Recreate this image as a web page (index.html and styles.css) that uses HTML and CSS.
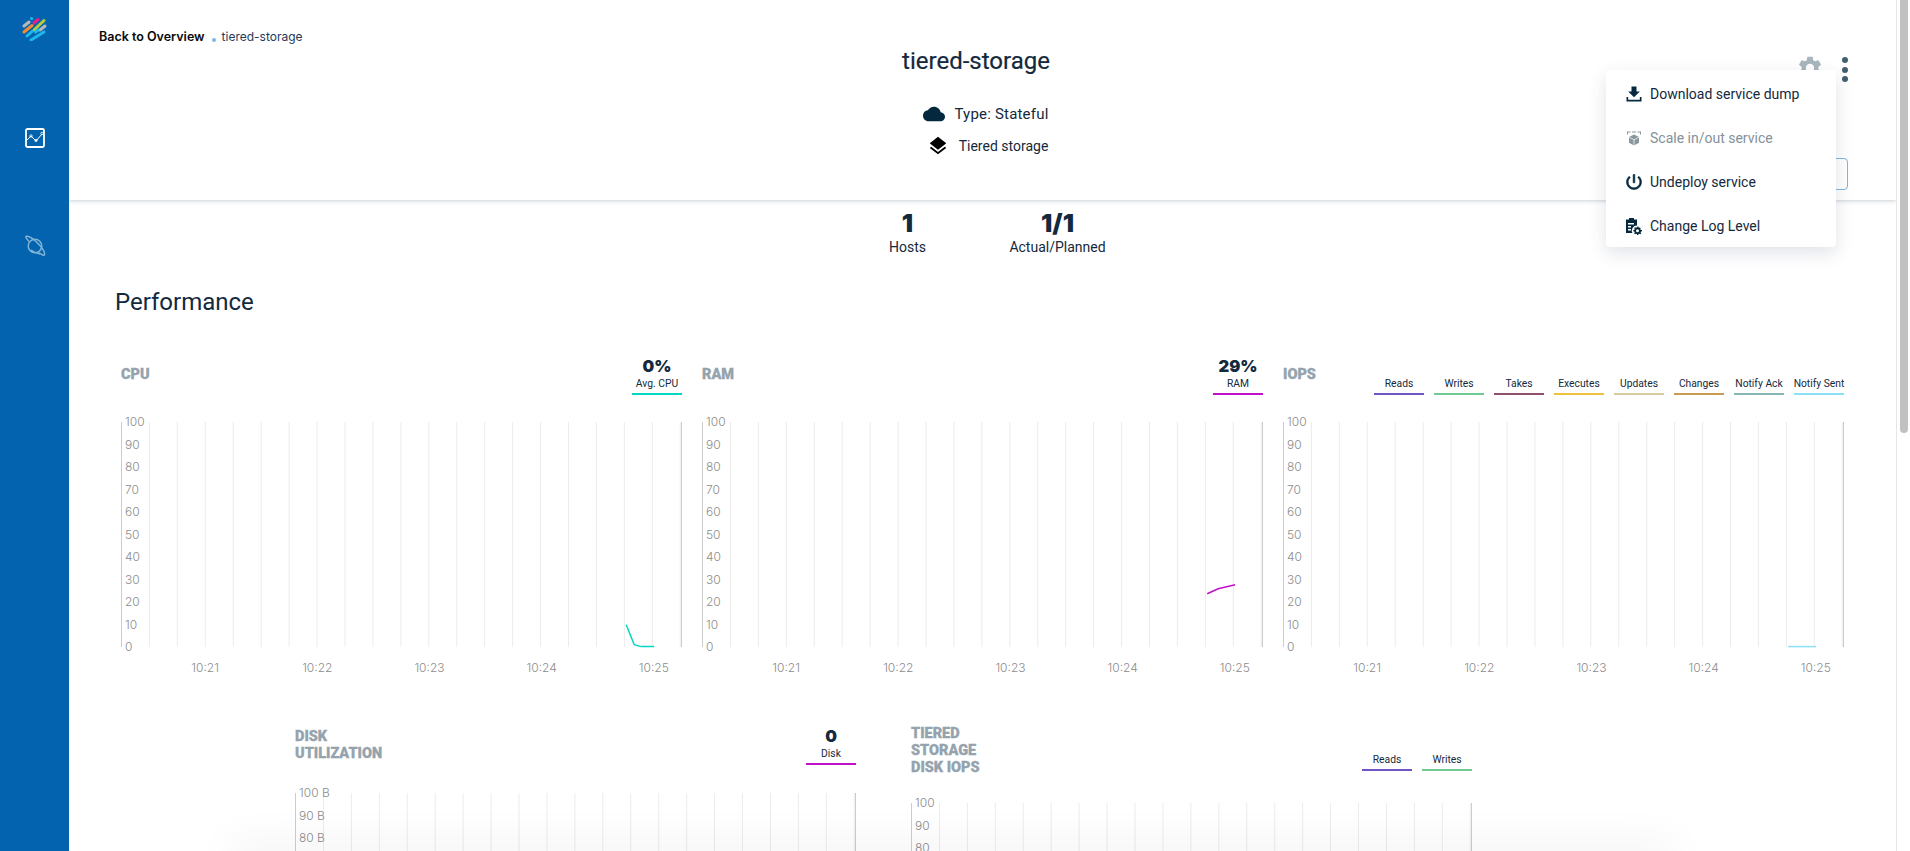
FILE: index.html
```html
<!DOCTYPE html>
<html lang="en">
<head>
    <meta charset="UTF-8">
    <title>tiered-storage</title>
    <link rel="stylesheet" href="styles.css">
</head>
<body>
    <nav class="sidebar">
        <svg class="logo" width="26" height="26" viewBox="0 0 26 26" fill="none" stroke-width="3" stroke-linecap="round">
            <path d="M2 11l5-4" stroke="#b4b8bc"/>
            <path d="M9.5 3.5h.1" stroke="#1fb6ec"/>
            <path d="M12 8l4-3.500" stroke="#ec1c8e"/>
            <path d="M2 17l8-6.500" stroke="#f28b30"/>
            <path d="M12 15l10-9.500" stroke="#b5cf3a"/>
            <path d="M18 15l5-4" stroke="#b4b8bc"/>
            <path d="M5 21l5-4.500" stroke="#1fb6ec"/>
            <path d="M9 25l13-8" stroke="#1fb6ec"/>
            <path d="M16 15l-2.500 2" stroke="#1fb6ec"/>
        </svg>
        <svg class="nav-icon" width="20" height="20" viewBox="0 0 20 20" fill="none" stroke="#fff">
            <rect x="1" y="1" width="18" height="18" rx="1.500" stroke-width="1.800"/>
            <path d="M1 13l5-5 5 5 6-7" stroke-width="1"/>
            <circle cx="6" cy="8" r="1.200" stroke-width="0.800"/>
            <circle cx="11" cy="12.500" r="1.200" stroke-width="0.800"/>
            <circle cx="17" cy="5.500" r="1.200" stroke-width="0.800"/>
        </svg>
        <svg class="nav-icon nav-icon-planet" width="22" height="22" viewBox="0 0 22 22" fill="none" stroke="#7fb4d8" stroke-width="1.500">
            <circle cx="11" cy="11" r="6.800"/>
            <path d="M5 6.500C2.500 3.500 1 1.800 2.500 1.300 4.500.700 9 3.500 13.500 8s7.500 9.500 7 11.500c-.4 1.500-2.500 .5-5.500-1.800"/>
            <path d="M7 15c2.500 2 6 3.500 9 4"/>
        </svg>
    </nav>

    <main class="content">
        <header class="page-header">
            <div class="header-top">
                <div class="breadcrumb">
                    <a class="crumb-back">Back to Overview</a>
                    <span class="crumb-dot"></span>
                    <span class="crumb-current">tiered-storage</span>
                </div>
                <div class="header-actions">
                    <div class="action-icons">
                        <svg width="28" height="28" viewBox="0 0 24 24" fill="#a8b6bc"><path d="M19.14 12.940c.04-.3.06-.61.06-.94 0-.32-.02-.64-.07-.94l2.030-1.580a.49.49 0 0 0 .12-.61l-1.920-3.320a.488.488 0 0 0-.59-.22l-2.390.96c-.5-.38-1.030-.7-1.620-.94l-.36-2.540a.484.484 0 0 0-.48-.41h-3.840c-.24 0-.43.17-.47.41l-.36 2.540c-.59.24-1.130.57-1.620.94l-2.390-.96c-.22-.08-.47 0-.59.22L2.740 8.870c-.12.21-.08.47.12.61l2.030 1.580c-.05.3-.09.63-.09.94s.02.64.07.94l-2.030 1.580a.49.49 0 0 0-.12.61l1.920 3.320c.12.22.37.29.59.22l2.390-.96c.5.38 1.030.7 1.620.94l.36 2.540c.05.24.24.41.48.41h3.840c.24 0 .44-.17.47-.41l.36-2.540c.59-.24 1.130-.56 1.620-.94l2.390.96c.22.08.47 0 .59-.22l1.920-3.320c.12-.22.07-.47-.12-.61l-2.010-1.580zM12 15.600c-1.980 0-3.600-1.620-3.600-3.600s1.620-3.600 3.600-3.600 3.600 1.620 3.600 3.600-1.620 3.600-3.600 3.600z"/></svg>
                        <div class="dots"><span></span><span></span><span></span></div>
                    </div>
                    <div class="outline-btn"></div>
                </div>
            </div>
            <div class="service-info">
                <h1>tiered-storage</h1>
                <div class="info-row info-type">
                    <svg width="22" height="22" viewBox="0 0 24 24" fill="#04293f"><path d="M19.350 10.040C18.670 6.590 15.640 4 12 4 9.110 4 6.600 5.640 5.350 8.040 2.340 8.360 0 10.910 0 14c0 3.310 2.690 6 6 6h13c2.760 0 5-2.240 5-5 0-2.640-2.050-4.780-4.650-4.960z"/></svg>
                    <span>Type: Stateful</span>
                </div>
                <div class="info-row info-tier">
                    <svg width="22" height="22" viewBox="0 0 24 24" fill="#000"><path d="M11.990 18.540l-7.370-5.730L3 14.070l9 7 9-7-1.630-1.270-7.380 5.740zM12 16l7.360-5.730L21 9l-9-7-9 7 1.630 1.270L12 16z"/></svg>
                    <span>Tiered storage</span>
                </div>
            </div>
        </header>

        <section class="stats">
            <div class="stat"><strong>1</strong><span>Hosts</span></div>
            <div class="stat"><strong>1/1</strong><span>Actual/Planned</span></div>
        </section>

        <h2 class="section-title">Performance</h2>

        <section class="chart-row">
            <div class="chart">
                <div class="chart-head">
                    <h3>CPU</h3>
                    <div class="legend">
                        <div class="legend-item"><strong>0%</strong><span>Avg. CPU</span><i class="c-teal"></i></div>
                    </div>
                </div>
                <div class="plot">
                    <div class="y-axis"><span>100</span><span>90</span><span>80</span><span>70</span><span>60</span><span>50</span><span>40</span><span>30</span><span>20</span><span>10</span><span>0</span></div>
                    <svg class="trace" viewBox="0 0 561 225"><polyline points="506,203 514,223 521,225 534,225" stroke="#00d9c0"/></svg>
                </div>
                <div class="x-axis"><span>10:21</span><span>10:22</span><span>10:23</span><span>10:24</span><span>10:25</span></div>
            </div>

            <div class="chart">
                <div class="chart-head">
                    <h3>RAM</h3>
                    <div class="legend">
                        <div class="legend-item"><strong>29%</strong><span>RAM</span><i class="c-magenta"></i></div>
                    </div>
                </div>
                <div class="plot">
                    <div class="y-axis"><span>100</span><span>90</span><span>80</span><span>70</span><span>60</span><span>50</span><span>40</span><span>30</span><span>20</span><span>10</span><span>0</span></div>
                    <svg class="trace" viewBox="0 0 561 225"><polyline points="506,172 517,167 534,163" stroke="#c010c8"/></svg>
                </div>
                <div class="x-axis"><span>10:21</span><span>10:22</span><span>10:23</span><span>10:24</span><span>10:25</span></div>
            </div>

            <div class="chart">
                <div class="chart-head">
                    <h3>IOPS</h3>
                    <div class="legend">
                        <div class="legend-item"><span>Reads</span><i class="c-purple"></i></div>
                        <div class="legend-item"><span>Writes</span><i class="c-green"></i></div>
                        <div class="legend-item"><span>Takes</span><i class="c-plum"></i></div>
                        <div class="legend-item"><span>Executes</span><i class="c-yellow"></i></div>
                        <div class="legend-item"><span>Updates</span><i class="c-sand"></i></div>
                        <div class="legend-item"><span>Changes</span><i class="c-ochre"></i></div>
                        <div class="legend-item"><span>Notify Ack</span><i class="c-sage"></i></div>
                        <div class="legend-item"><span>Notify Sent</span><i class="c-sky"></i></div>
                    </div>
                </div>
                <div class="plot">
                    <div class="y-axis"><span>100</span><span>90</span><span>80</span><span>70</span><span>60</span><span>50</span><span>40</span><span>30</span><span>20</span><span>10</span><span>0</span></div>
                    <svg class="trace" viewBox="0 0 561 225"><polyline points="506,225 534,225" stroke="#8be0f5"/></svg>
                </div>
                <div class="x-axis"><span>10:21</span><span>10:22</span><span>10:23</span><span>10:24</span><span>10:25</span></div>
            </div>
        </section>

        <section class="chart-row chart-row-second">
            <div class="chart chart-disk">
                <div class="chart-head">
                    <h3>Disk<br>Utilization</h3>
                    <div class="legend">
                        <div class="legend-item"><strong>0</strong><span>Disk</span><i class="c-magenta"></i></div>
                    </div>
                </div>
                <div class="plot">
                    <div class="y-axis"><span>100 B</span><span>90 B</span><span>80 B</span></div>
                </div>
            </div>

            <div class="chart">
                <div class="chart-head">
                    <h3>Tiered<br>Storage<br>Disk IOPS</h3>
                    <div class="legend">
                        <div class="legend-item"><span>Reads</span><i class="c-purple"></i></div>
                        <div class="legend-item"><span>Writes</span><i class="c-green"></i></div>
                    </div>
                </div>
                <div class="plot">
                    <div class="y-axis"><span>100</span><span>90</span><span>80</span></div>
                </div>
            </div>
        </section>

        <ul class="action-menu">
            <li>
                <svg width="20" height="20" viewBox="0 0 24 24" fill="#04293f"><path d="M19 9h-4V3H9v6H5l7 7 7-7zM3 15.500V21h18v-5.500h-2V19H5v-3.500z"/></svg>
                Download service dump
            </li>
            <li class="disabled">
                <svg width="18" height="18" viewBox="0 0 18 18" fill="#8a979e"><path d="M9 5.500l5 2.600v5.600L9 16.500l-5-2.800V8.100z"/><path d="M4 8.100l5 2.700 5-2.700M9 10.800v5.700" fill="none" stroke="#fff" stroke-width="0.700"/><path d="M2 2.500h3.500v1H3v2H2zM16 2.500h-3.500v1H15v2h1zM7 2.500h4v1H7z"/></svg>
                Scale in/out service
            </li>
            <li>
                <svg width="20" height="20" viewBox="0 0 24 24" fill="#04293f" stroke="#04293f" stroke-width="0.700"><path d="M13 3h-2v10h2V3zm4.830 2.170l-1.420 1.420C17.990 7.860 19 9.810 19 12c0 3.870-3.130 7-7 7s-7-3.130-7-7c0-2.190 1.010-4.140 2.580-5.420L6.170 5.170C4.230 6.820 3 9.260 3 12c0 4.970 4.030 9 9 9s9-4.030 9-9c0-2.740-1.230-5.180-3.170-6.830z"/></svg>
                Undeploy service
            </li>
            <li>
                <svg width="18" height="18" viewBox="0 0 18 18" fill="#04293f"><path d="M1 2.500h3V1h5v1.500h3v6a5 5 0 0 0-4.500 7.500H1zM3 6v1.500h6V6zM3 9v1.500h3V9zM3 12v1.500h3V12z"/><path d="M12.500 9.500l1 .2.300 1.100 1.100-.4.800.8-.5 1 .8.800 1 .1v1.200l-1 .2-.4 1 .6.900-.8.800-1-.5-.9.400-.2 1h-1.200l-.2-1-1-.4-.9.500-.8-.8.500-.9-.4-1-1-.2v-1.200l1-.2.400-1-.5-.9.800-.8.900.5 1-.4zM12.500 12.300a1.500 1.500 0 1 0 0 3 1.500 1.500 0 0 0 0-3z"/></svg>
                Change Log Level
            </li>
        </ul>
    </main>

    <div class="scroll-track"><div class="scroll-thumb"></div></div>
    <div class="bottom-shade"></div>
</body>
</html>
```

FILE: styles.css
```css
html, body {
    height: 100%;
    margin: 0;
}
body {
    display: flex;
    height: 851px;
    overflow: hidden;
    font-family: Roboto, "Liberation Sans", sans-serif;
    color: #13293d;
    background-color: #fff;
}

/* sidebar */
.sidebar {
    flex: 0 0 69px;
    display: flex;
    flex-direction: column;
    align-items: center;
    background-color: #0463ae;
}
.logo {
    margin-top: 15px;
}
.nav-icon {
    margin-top: 87px;
}
.nav-icon-planet {
    margin-top: 87px;
}

/* main area */
.content {
    position: relative;
    flex: 1;
    min-width: 0;
    overflow: hidden;
}
.page-header {
    height: 200px;
    box-sizing: border-box;
    padding-top: 28px;
    background-color: #fff;
    box-shadow: 0 1px 4px rgba(40, 70, 100, 0.25);
}
.header-top {
    display: flex;
    justify-content: space-between;
    height: 17px;
    padding: 0 48px 0 30px;
}
.breadcrumb {
    display: flex;
    align-items: center;
    height: 17px;
    font-family: Inter, sans-serif;
    font-size: 12.500px;
}
.crumb-back {
    font-weight: 600;
    color: #0a0a0a;
}
.crumb-dot {
    width: 4px;
    height: 4px;
    margin: 6px 6px 0 7px;
    border-radius: 50%;
    background-color: #7db8e8;
}
.crumb-current {
    font-size: 12px;
    color: #25395a;
}
.header-actions {
    display: flex;
    flex-direction: column;
    align-items: flex-end;
    padding-top: 26px;
}
.action-icons {
    flex: none;
    display: flex;
    align-items: center;
    gap: 18px;
}
.dots {
    display: flex;
    flex-direction: column;
    gap: 3.500px;
    margin-top: 3px;
}
.dots span {
    width: 6px;
    height: 6px;
    border-radius: 50%;
    background-color: #40606f;
}
.outline-btn {
    flex: none;
    box-sizing: border-box;
    width: 200px;
    height: 32px;
    margin-top: 76px;
    border: 1px solid #7db8e0;
    border-radius: 4px;
}
.service-info {
    display: flex;
    flex-direction: column;
    align-items: center;
    padding-right: 13px;
}
h1 {
    margin: 1px 0 0;
    font-size: 24px;
    line-height: 30px;
    font-weight: 400;
    -webkit-text-stroke: 0.2px #13293d;
}
.info-row {
    display: flex;
    align-items: center;
    margin-left: 20px;
    font-size: 15px;
    letter-spacing: 0.2px;
}
.info-type {
    gap: 9px;
    margin-top: 25px;
    height: 26px;
}
.info-tier {
    gap: 10px;
    margin-top: 6px;
    margin-left: 23px;
    height: 26px;
    font-size: 14px;
    letter-spacing: 0;
}

/* stats */
.stats {
    display: flex;
    justify-content: center;
    margin-top: 10px;
}
.stat {
    display: flex;
    flex-direction: column;
    align-items: center;
    width: 150px;
}
.stat strong {
    font-family: Inter, sans-serif;
    font-size: 25px;
    line-height: 26px;
    font-weight: 900;
}
.stat span {
    margin-top: 2px;
    font-size: 14px;
    line-height: 18px;
}
.section-title {
    margin: 31px 0 0 46px;
    font-size: 24px;
    line-height: 30px;
    font-weight: 400;
}

/* charts */
.chart-row {
    display: flex;
    gap: 20px;
    margin-top: 37px;
    padding-left: 52px;
}
.chart-row-second {
    gap: 55px;
    margin-top: 49px;
    padding-left: 226px;
}
.chart {
    flex: 0 0 561px;
    width: 561px;
}
.chart-head {
    display: flex;
    justify-content: space-between;
    align-items: center;
    margin-bottom: 27px;
}
.chart-disk .chart-head {
    margin-top: -1px;
    margin-bottom: 28px;
}
.chart-head h3 {
    margin: 0;
    font-size: 14.500px;
    line-height: 17px;
    font-weight: 900;
    text-transform: uppercase;
    color: #94a3ad;
    -webkit-text-stroke: 0.3px #94a3ad;
}
.legend {
    display: flex;
    gap: 10px;
}
.legend-item {
    display: flex;
    flex-direction: column;
    justify-content: flex-end;
    align-items: center;
    width: 50px;
    height: 41px;
    font-size: 10.300px;
    white-space: nowrap;
}
.legend-item strong {
    font-family: Inter, sans-serif;
    font-size: 16.500px;
    line-height: 21px;
    font-weight: 900;
}
.legend-item span {
    line-height: 14px;
}
.legend-item i {
    flex: none;
    width: 100%;
    height: 2.500px;
    margin-top: 2px;
}
.c-teal { background-color: #00d9c0; }
.c-magenta { background-color: #c010c8; }
.c-purple { background-color: #6f55c8; }
.c-green { background-color: #6fcb92; }
.c-plum { background-color: #8f4f6f; }
.c-yellow { background-color: #f0c040; }
.c-sand { background-color: #d9cba0; }
.c-ochre { background-color: #c89b50; }
.c-sage { background-color: #88b5b5; }
.c-sky { background-color: #8be0f5; }

.plot {
    position: relative;
    height: 225px;
    border-left: 1px solid #ccc;
    border-right: 1px solid #ccc;
    background-image: linear-gradient(to right, transparent calc(100% - 1px), #ececec calc(100% - 1px));
    background-size: 5% 100%;
}
.y-axis {
    display: grid;
    grid-auto-rows: 22.500px;
    padding-left: 3px;
    font-family: Inter, sans-serif;
    font-size: 12px;
    font-weight: 300;
    color: #8c8c8c;
}
.y-axis span {
    height: 0;
    line-height: 0;
}
.trace {
    position: absolute;
    top: 0;
    left: 0;
    width: 100%;
    height: 100%;
    overflow: visible;
}
.trace polyline {
    fill: none;
    stroke-width: 1.500;
}
.x-axis {
    display: flex;
    padding: 13px 0 0 28px;
    font-family: Inter, sans-serif;
    font-size: 12px;
    font-weight: 300;
    line-height: 16px;
    color: #8c8c8c;
}
.x-axis span {
    flex: 0 0 112.200px;
    text-align: center;
}

/* dropdown */
.action-menu {
    position: absolute;
    top: 70px;
    left: 1537px;
    width: 230px;
    box-sizing: border-box;
    margin: 0;
    padding: 2px 0 0;
    list-style: none;
    background-color: #fff;
    border-radius: 4px;
    box-shadow: 0 6px 18px rgba(40, 60, 90, 0.14);
}
.action-menu li {
    display: flex;
    align-items: center;
    height: 43px;
    margin-bottom: 1px;
    padding-left: 18px;
    font-size: 14px;
}
.action-menu li:last-child {
    margin-bottom: 0;
}
.action-menu li svg {
    width: 20px;
    margin-right: 6px;
}
.action-menu .disabled {
    color: #83919a;
}

/* fake scrollbar, same as the window one */
.scroll-track {
    flex: 0 0 13px;
    border-left: 1px solid #e6e6e6;
    background-color: #fff;
}
.scroll-thumb {
    width: 8px;
    height: 433px;
    margin-left: 3px;
    border-radius: 0 0 4px 4px;
    background-color: #c1c1c1;
}

/* something below the fold throws a shadow up over the page */
.bottom-shade {
    position: fixed;
    left: 232px;
    right: 238px;
    bottom: -6px;
    height: 6px;
    box-shadow: 0 0 40px rgba(0, 0, 0, 0.22);
}
```
